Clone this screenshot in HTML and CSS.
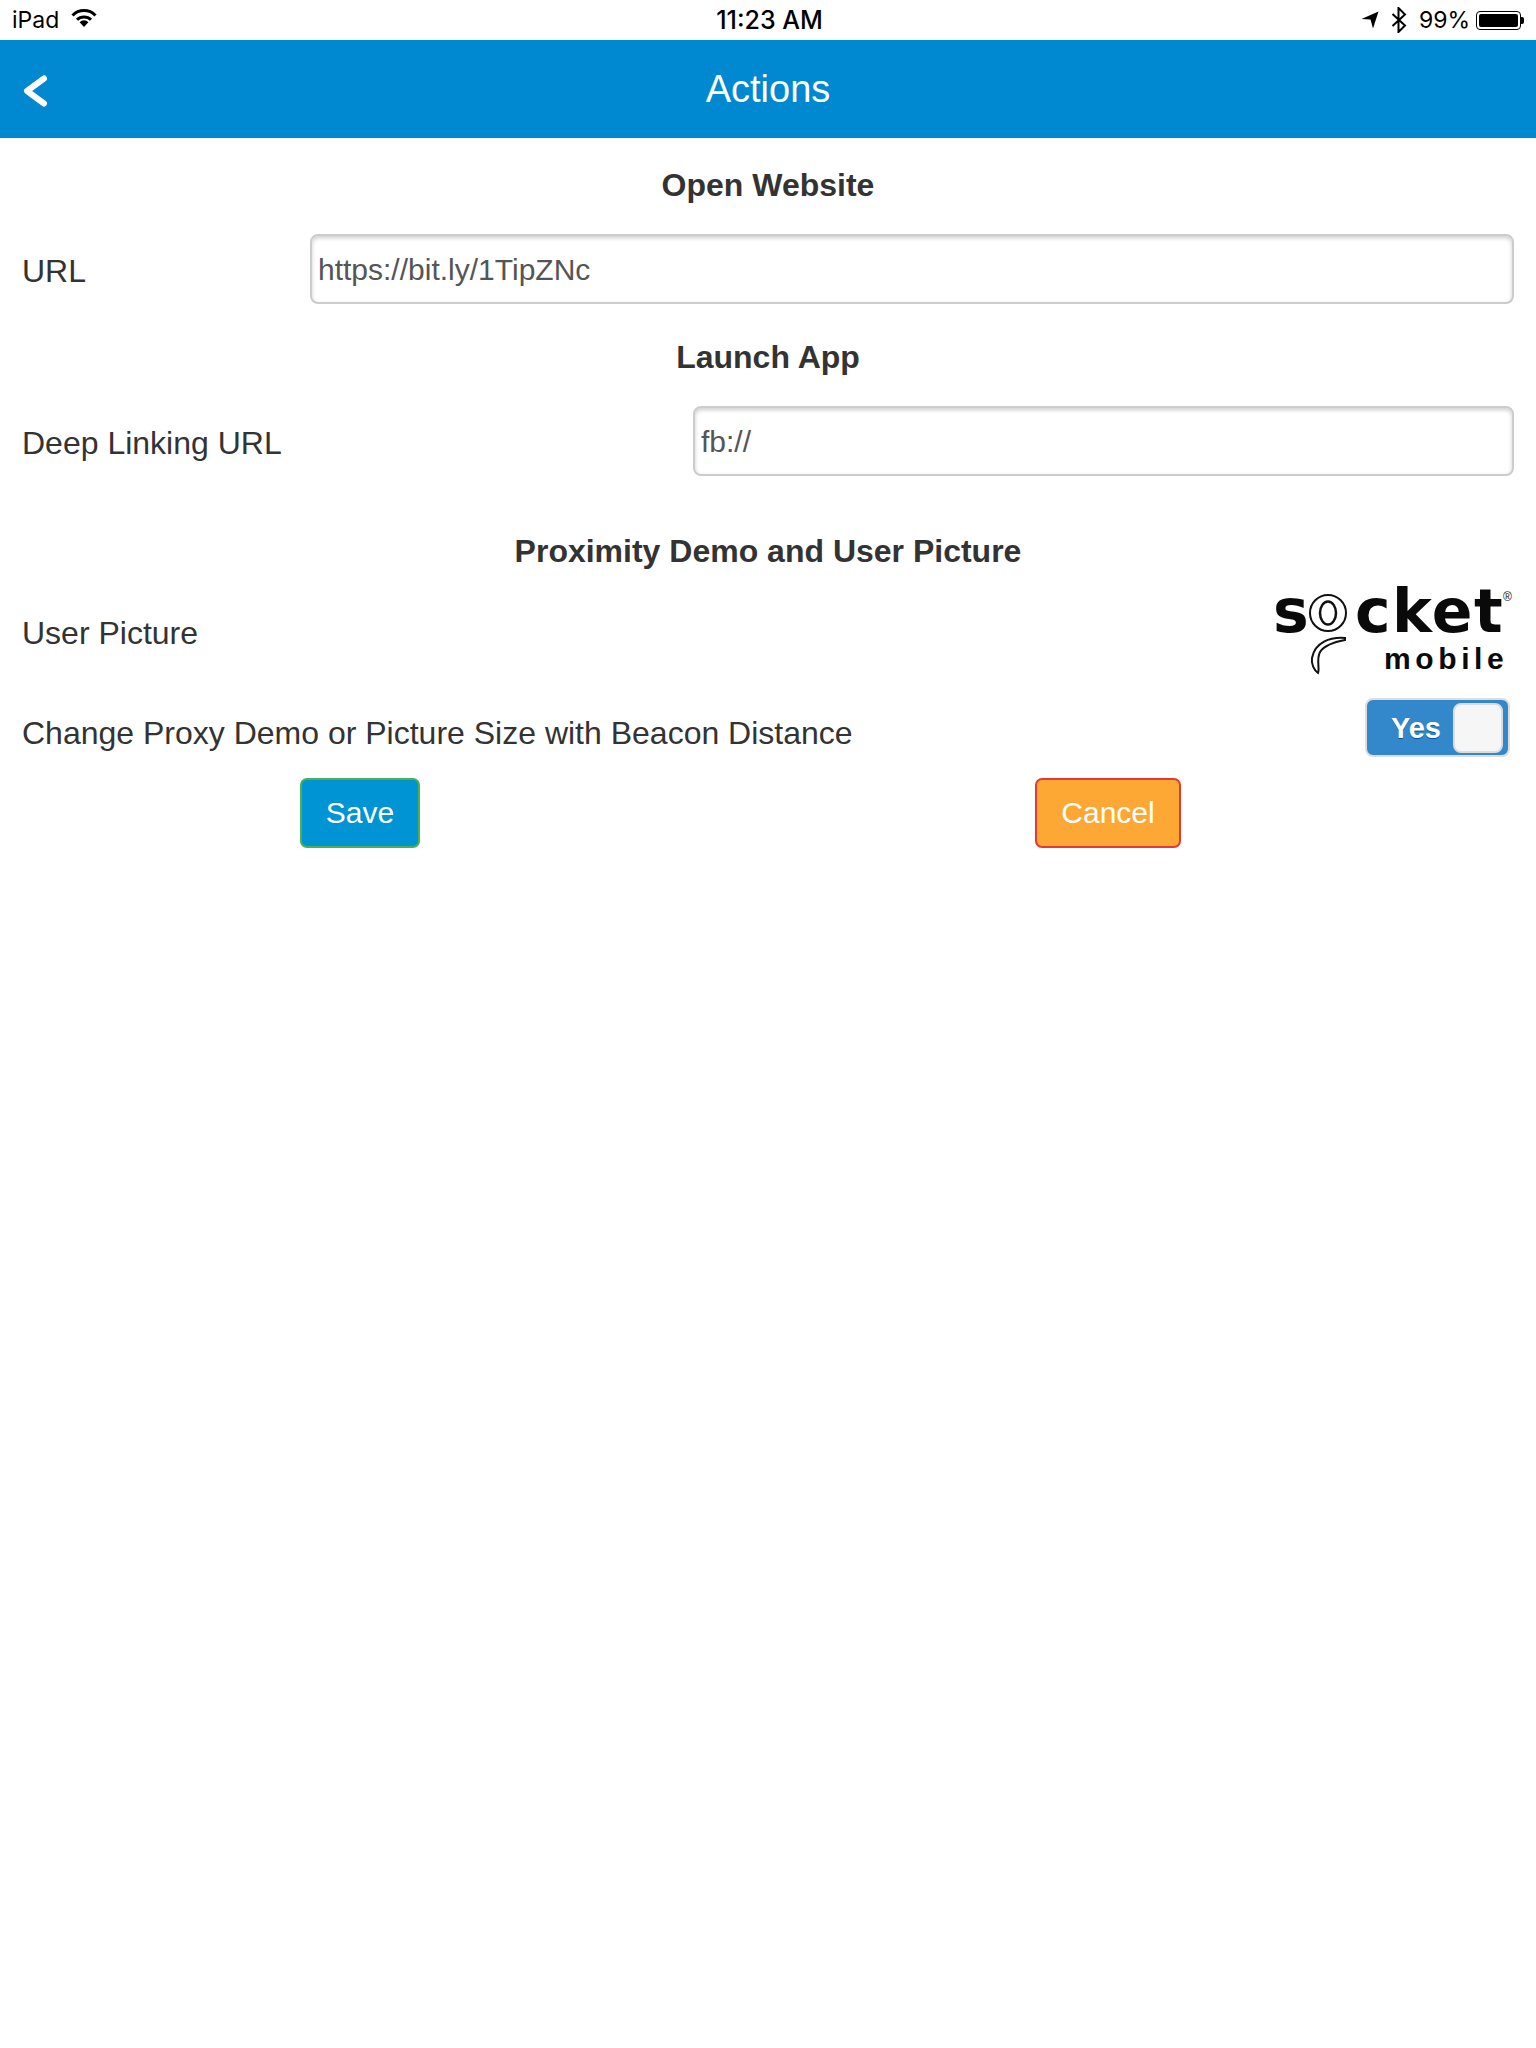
FILE: index.html
```html
<!DOCTYPE html>
<html lang="en">
<head>
    <meta charset="UTF-8">
    <meta name="viewport" content="width=device-width, initial-scale=1.0">
    <title>Actions</title>
    <link rel="stylesheet" href="styles.css">
</head>
<body>
    <div class="status-bar">
        <div class="status-left">
            <span>iPad</span>
            <svg class="wifi" width="26" height="18" viewBox="0 0 26 18">
                <path d="M1.5 6.5 A16 16 0 0 1 24.5 6.5" fill="none" stroke="#000" stroke-width="3"/>
                <path d="M6 10.8 A10 10 0 0 1 20 10.8" fill="none" stroke="#000" stroke-width="3"/>
                <path d="M8.6 13.2 A6.2 6.2 0 0 1 17.4 13.2 L13 18 Z" fill="#000"/>
            </svg>
        </div>
        <div class="status-time">11:23 AM</div>
        <div class="status-right">
            <svg class="arrow" width="18" height="18" viewBox="0 0 18 18"><path d="M0.500 8 L17.500 0.500 L12 17.500 L9.500 8.500 Z" fill="#000"/></svg>
            <svg class="bluetooth" width="18" height="26" viewBox="0 0 18 26"><path d="M2.500 7 L15 18.500 L8.500 25 V1 L15 7.500 L2.500 19" fill="none" stroke="#000" stroke-width="2"/></svg>
            <span class="battery-pct">99%</span>
            <div class="battery"><div class="battery-fill"></div></div>
        </div>
    </div>

    <div class="header">
        <svg class="back" width="26" height="32" viewBox="0 0 26 32"><path d="M22 3.5 L5 16 L22 28.500" fill="none" stroke="#fff" stroke-width="6" stroke-linecap="round" stroke-linejoin="round"/></svg>
        <h1>Actions</h1>
    </div>

    <div class="content">
        <h2 class="section-title first">Open Website</h2>
        <div class="field-row">
            <label>URL</label>
            <input class="url-input" type="text" value="https://bit.ly/1TipZNc">
        </div>

        <h2 class="section-title launch">Launch App</h2>
        <div class="field-row">
            <label>Deep Linking URL</label>
            <input class="deep-input" type="text" value="fb://">
        </div>

        <h2 class="section-title proximity">Proximity Demo and User Picture</h2>
        <div class="picture-row">
            <label>User Picture</label>
            <svg class="logo" width="244" height="106" viewBox="0 -10 244 106">
                <text class="logo-word" x="3" y="52">s</text>
                <circle cx="58" cy="33" r="18" fill="#fff" stroke="#111" stroke-width="2"/>
                <ellipse cx="58" cy="33" rx="8" ry="11.500" fill="none" stroke="#111" stroke-width="2.500"/>
                <text class="logo-word cket" x="85" y="52">cket</text>
                <text class="logo-reg" x="233" y="21">®</text>
                <path d="M75 58 C60 57 45 62 42 78 C41 84 44 90 48 93 C50 88 46 80 50 72 C54 66 64 62 75 60 Z" fill="#fff" stroke="#111" stroke-width="2"/>
                <text class="logo-sub" x="114" y="89">mobile</text>
            </svg>
        </div>
        <div class="toggle-row">
            <label>Change Proxy Demo or Picture Size with Beacon Distance</label>
            <div class="toggle">
                <span class="toggle-label">Yes</span>
                <span class="toggle-knob"></span>
            </div>
        </div>
        <div class="actions">
            <button class="btn-save">Save</button>
            <button class="btn-cancel">Cancel</button>
        </div>
    </div>
</body>
</html>
```

FILE: styles.css
```css
* { box-sizing: border-box; }
body {
    margin: 0;
    background: #fff;
    color: #333;
    font-family: "Liberation Sans", Arial, sans-serif;
    font-size: 32px;
}
.status-bar {
    display: grid;
    grid-template-columns: 1fr auto 1fr;
    align-items: center;
    height: 40px;
    padding: 0 15px 0 12px;
    color: #000;
    font-family: Inter, "Liberation Sans", sans-serif;
    font-size: 23px;
}
.status-left {
    display: flex;
    align-items: center;
    gap: 12px;
}
.wifi { margin-top: -4px; }
.status-time {
    margin-left: 6px;
    font-size: 25px;
    font-weight: 500;
}
.status-right {
    display: flex;
    align-items: center;
    justify-content: flex-end;
}
.arrow { margin-right: 11px; }
.bluetooth { margin-right: 11px; }
.battery-pct {
    margin-right: 6px;
    font-size: 23px;
}
.battery {
    position: relative;
    width: 45px;
    height: 19px;
    padding: 2px;
    border: 1px solid #000;
    border-radius: 4px;
}
.battery::after {
    content: "";
    position: absolute;
    right: -4px;
    top: 5px;
    width: 3px;
    height: 7px;
    background: #000;
    border-radius: 0 2px 2px 0;
}
.battery-fill {
    height: 100%;
    background: #000;
    border-radius: 2px;
}
.header {
    position: relative;
    height: 98px;
    background: #0088d1;
    display: flex;
    align-items: center;
    justify-content: center;
}
.header h1 {
    margin: 0;
    color: #fff;
    font-size: 38px;
    font-weight: normal;
}
.back {
    position: absolute;
    left: 22px;
    top: 35px;
}
.content { padding: 0 22px; }
.section-title {
    margin: 0;
    font-size: 32px;
    line-height: 40px;
    text-align: center;
}
.first { padding-top: 27px; }
.launch { padding-top: 33px; }
.proximity { padding-top: 55px; }
.field-row {
    display: flex;
    align-items: center;
    justify-content: space-between;
    margin-top: 29px;
}
.field-row label { padding-top: 5px; }
input {
    height: 70px;
    padding: 2px 6px 0;
    border: 2px solid #ccc;
    border-radius: 8px;
    box-shadow: inset 0 2px 4px rgba(0, 0, 0, .2);
    color: #555;
    font-family: inherit;
    font-size: 30px;
    outline: none;
}
.url-input { width: 1204px; }
.deep-input { width: 821px; }
.picture-row {
    display: flex;
    align-items: center;
    justify-content: space-between;
    margin-top: 9px;
}
.picture-row label { padding-top: 10px; }
.logo { margin-top: -10px; }
.logo-word {
    font-family: "DejaVu Sans", sans-serif;
    font-weight: bold;
    font-size: 60px;
    fill: #0a0a0a;
}
.cket { letter-spacing: 1.5px; }
.logo-sub {
    font-family: "Liberation Sans", sans-serif;
    font-weight: bold;
    font-size: 30px;
    letter-spacing: 4.6px;
    fill: #0a0a0a;
}
.logo-reg {
    font-family: "Liberation Sans", sans-serif;
    font-size: 12px;
    fill: #111;
}
.toggle-row {
    display: flex;
    align-items: center;
    justify-content: space-between;
    margin-top: 22px;
    padding-right: 4px;
}
.toggle-row label { padding-top: 11px; }
.toggle {
    display: flex;
    align-items: center;
    width: 145px;
    height: 59px;
    padding: 3px 5px 3px 0;
    background: #3388cc;
    border: 2px solid #ddd;
    border-radius: 8px;
}
.toggle-label {
    flex: 1;
    padding: 1px 0 0 24px;
    color: #fff;
    font-size: 29px;
    font-weight: bold;
    text-shadow: 0 1px 0 #005599;
}
.toggle-knob {
    width: 50px;
    height: 50px;
    background: #f6f6f6;
    border: 2px solid #ddd;
    border-radius: 8px;
}
.actions {
    display: flex;
    gap: 615px;
    margin-top: 21px;
    padding-left: 278px;
}
button {
    height: 70px;
    border-radius: 7px;
    color: #fff;
    font-family: inherit;
    font-size: 30px;
    cursor: pointer;
}
.btn-save {
    width: 120px;
    background: #0094d4;
    border: 2px solid #4caf50;
}
.btn-cancel {
    width: 146px;
    background: #fda835;
    border: 2px solid #e53935;
}
```
